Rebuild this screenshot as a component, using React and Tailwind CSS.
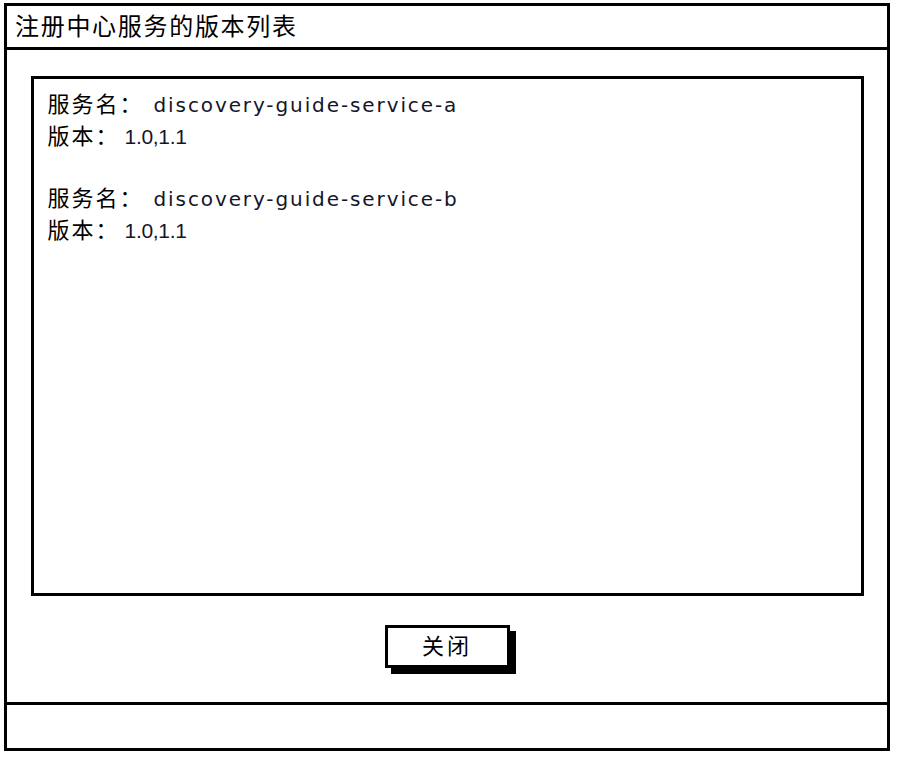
import React from 'react';

const services = [
  { name: 'discovery-guide-service-a', versions: '1.0,1.1' },
  { name: 'discovery-guide-service-b', versions: '1.0,1.1' },
];

const font = { fontFamily: '"Liberation Sans", "Noto Sans CJK SC", sans-serif' };
const nameFont = { fontFamily: '"DejaVu Sans", "Liberation Sans", sans-serif' };

export default function App() {
  return (
    <div className="w-[897px] h-[757px] bg-white pl-[4px] pt-[3px]" style={font}>
      <div className="w-[886px] h-[748px] border-[3px] border-black flex flex-col">
        {/* Title bar */}
        <div className="h-[44px] border-b-[3px] border-black flex items-center pl-[8px] text-[24px] tracking-[1.7px] text-black">
          注册中心服务的版本列表
        </div>

        {/* Body */}
        <div className="flex-1 flex flex-col items-center">
          <div className="mt-[26px] w-[833px] h-[520px] border-[3px] border-black px-[14px] pt-[10px] leading-[31px] text-[#15152a]">
            {services.map((s, i) => (
              <div key={s.name} className={i > 0 ? 'mt-[31px]' : ''}>
                <div className="flex items-baseline">
                  <span className="text-[22px] tracking-[2px] text-black">服务名：</span>
                  <span className="ml-[10px] text-[20px] tracking-[1.9px]" style={nameFont}>{s.name}</span>
                </div>
                <div className="flex items-baseline">
                  <span className="text-[22px] tracking-[2px] text-black">版本：</span>
                  <span className="ml-[5px] text-[21px] tracking-[-0.3px]">{s.versions}</span>
                </div>
              </div>
            ))}
          </div>
          <button className="mt-[29px] w-[125px] h-[43px] border-[3px] border-black bg-white shadow-[6px_6px_0_#000] text-[22px] tracking-[3px] text-black flex items-center justify-center">
            关闭
          </button>
        </div>

        {/* Status bar */}
        <div className="h-[46px] border-t-[3px] border-black"></div>
      </div>
    </div>
  );
}
